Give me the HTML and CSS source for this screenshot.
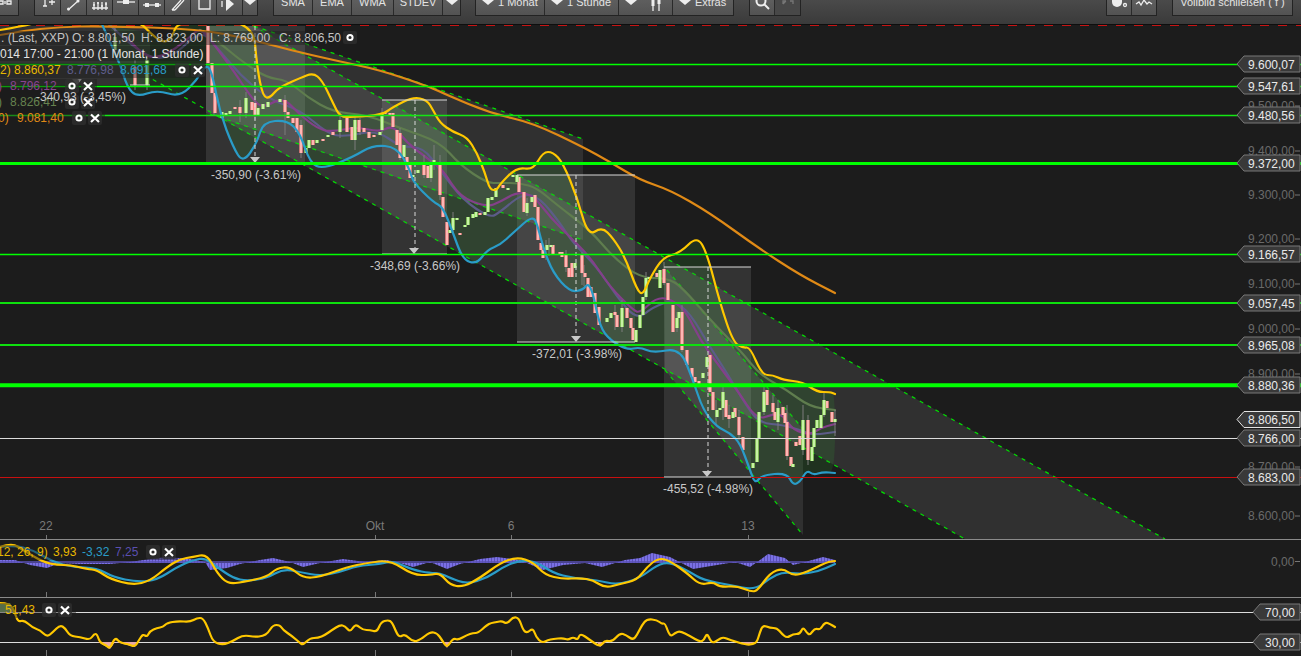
FILE: index.html
```html
<!DOCTYPE html>
<html lang="de">
<head>
<meta charset="utf-8">
<title>Chart</title>
<link rel="stylesheet" href="styles.css">
</head>
<body>
<header class="toolbar">
  <div class="group g-a">
    <div class="btn w27"><svg class="ico" viewBox="0 0 18 18"><path class="ws" d="M9 8v3M3 8h4v3H3zM11 8h4v3h-4z"/></svg></div>
  </div>
  <div class="group g-b">
    <div class="btn w26"><svg class="ico" viewBox="0 0 18 18"><path class="ws" d="M6 7v6M4 13h4M10 9h6M13 6v6"/></svg></div>
    <div class="btn w26"><svg class="ico" viewBox="0 0 18 18"><path class="ws" d="M3 17L13 8"/><circle class="wf" cx="3.5" cy="16" r="1.5"/><circle class="wf" cx="13" cy="8" r="1.5"/></svg></div>
    <div class="btn w26"><svg class="ico" viewBox="0 0 18 18"><path class="ws" d="M1 15h16M3 9v8M7 9v8M11 9v8M15 9v8"/><path class="ws" d="M2 12h2M6 10h2M10 13h2M14 11h2"/></svg></div>
    <div class="btn w26"><svg class="ico" viewBox="0 0 18 18"><path class="ws" d="M0 9h18"/><rect class="wf" x="6" y="7" width="6" height="4"/></svg></div>
    <div class="btn w26"><svg class="ico" viewBox="0 0 18 18"><path class="ws" d="M0 12h18"/><rect class="wf" x="2" y="10" width="4" height="4"/><rect class="wf" x="12" y="10" width="4" height="4"/></svg></div>
    <div class="btn w26"><svg class="ico" viewBox="0 0 18 18"><path class="ws" d="M3 17L12 7M6 17L15 7M3 17h3"/></svg></div>
    <div class="btn w26"><svg class="ico" viewBox="0 0 18 18"><path class="ws" d="M4 6v10h11V6"/></svg></div>
    <div class="btn w26"><svg class="ico" viewBox="0 0 18 18"><path class="wf" d="M5 4v14l8-7z"/><path class="ws" d="M1 8v6"/></svg></div>
    <div class="btn w14"><svg class="ico" viewBox="0 0 18 18"><path class="wf" d="M3 7h12l-6 5z"/></svg></div>
  </div>
  <div class="group g-c">
    <div class="btn w39">SMA</div>
    <div class="btn w39">EMA</div>
    <div class="btn w42">WMA</div>
    <div class="btn w49">STDEV</div>
    <div class="btn w17"><svg class="ico" viewBox="0 0 18 18"><path class="wf" d="M3 7h12l-6 5z"/></svg></div>
  </div>
  <div class="group g-d">
    <div class="btn w69 withcaret"><svg class="ico" viewBox="0 0 18 18"><path class="wf" d="M3 7h12l-6 5z"/></svg>1 Monat</div>
    <div class="btn w74 withcaret"><svg class="ico" viewBox="0 0 18 18"><path class="wf" d="M3 7h12l-6 5z"/></svg>1 Stunde</div>
    <div class="btn w54 withcaret"><svg class="ico" viewBox="0 0 18 18"><path class="wf" d="M3 7h12l-6 5z"/></svg><svg class="ico ico-gap" viewBox="0 0 18 18"><path class="ws" d="M6 3v15M12 3v15"/><rect class="wf" x="4.5" y="3" width="3" height="10"/><rect class="wf" x="10.5" y="3" width="3" height="8"/></svg></div>
    <div class="btn w60 withcaret"><svg class="ico" viewBox="0 0 18 18"><path class="wf" d="M3 7h12l-6 5z"/></svg>Extras</div>
  </div>
  <div class="group g-e">
    <div class="btn w25"><svg class="ico" viewBox="0 0 18 18"><circle class="ws2" cx="8" cy="8" r="4.5"/><path class="ws2" d="M11 11l5 5"/></svg></div>
    <div class="btn w25 off"><svg class="ico" viewBox="0 0 18 18"><path class="ds" d="M7 8H4v3M4 11l3-3M11 8h3v3"/></svg></div>
  </div>
  <div class="group g-f">
    <div class="btn w25"><svg class="ico" viewBox="0 0 18 18"><path class="wf" d="M2 6h10v3a5 5 0 0 1-10 0z"/><circle class="ws" cx="15" cy="12" r="1.5"/></svg></div>
    <div class="btn w24"><svg class="ico" viewBox="0 0 18 18"><path class="ws" d="M1 11l3-2 2 3 3-5 3 4 2-2 3 2"/></svg></div>
  </div>
  <div class="group g-g">
    <div class="btn w119">Vollbild schließen ( f )</div>
  </div>
</header>
<main class="stage">
<svg class="chart" viewBox="0 25 1301 631" xmlns="http://www.w3.org/2000/svg">
  <defs>
    <pattern id="hist" width="3" height="10" patternUnits="userSpaceOnUse">
      <rect class="hist-a" width="2" height="10"/>
      <rect class="hist-b" x="2" width="1" height="10"/>
    </pattern>
  </defs>
  <line class="reddash" x1="0" y1="25.5" x2="1301" y2="25.5"/>

  <!-- channels -->
  <polygon class="shade" points="206,26 254,26 583,139 583,240 206,113"/>
  <polygon class="shade" points="253,26 1165,539 965,539 206,110 206,26"/>
  <polygon class="shade" points="664,267 803,429 803,535 665,370"/>
  <!-- measured boxes -->
  <rect class="box" x="206" y="26" width="99" height="137"/>
  <rect class="box" x="382" y="100" width="65" height="154"/>
  <rect class="box" x="517" y="175" width="118" height="167"/>
  <rect class="box" x="664" y="267" width="87" height="210"/>
  <rect class="box" x="0" y="26" width="150" height="59"/>

  <!-- channel borders -->
  <path class="dash" d="M254 26L583 139M253 26L1165 539M145 75L965 539M210 114L583 240M667 270L803 429M665 370L803 535"/>

  <!-- bollinger fill -->
  <polygon class="band smooth" points="150,33 163,43 172,38 178,20 253,20 257,67 263,97 270,98 278,88 300,78 313,73 322,80 333,103 340,117 353,117 382,115 393,107 413,97 427,100 433,110 440,123 453,132 467,137 477,153 485,173 490,190 497,190 500,184 517,167 533,170 543,152 553,152 563,163 577,197 588,236 602,227 613,238 625,257 637,290 643,295 650,278 663,257 680,253 697,236 707,253 720,303 733,342 743,348 750,347 762,375 773,375 783,380 803,382 817,392 830,392 835,394 835,473 823,472 813,475 807,470 800,482 793,485 787,473 762,475 755,484 750,470 740,443 730,433 717,427 703,410 693,380 680,348 653,353 640,347 627,350 610,340 600,327 593,293 588,283 583,290 570,292 553,273 543,247 538,227 533,215 513,233 500,245 487,250 477,264 463,260 453,233 443,207 433,202 413,182 397,147 373,145 353,157 323,169 310,163 300,133 287,120 263,122 257,143 243,163 233,147 220,113 213,77 207,63 197,80 180,97 157,90 137,97 127,87 120,63 110,26"/>

  <!-- moving averages -->
  <polyline class="ln olive smooth" points="200,30 220,43 240,60 267,78 287,80 307,97 333,112 367,115 400,128 440,142 460,165 487,183 500,183 520,183 537,188 557,205 590,230 613,257 640,278 667,278 682,287 713,323 740,350 760,375 787,390 810,407 835,410"/>
  <polyline class="ln slate smooth" points="110,25 140,55 170,60 200,30 215,45 240,75 270,100 300,110 327,133 343,137 377,130 400,147 423,147 440,170 463,200 490,218 500,212 523,193 540,198 560,223 573,243 597,267 617,297 637,320 653,307 673,300 690,313 710,347 727,373 747,407 760,423 783,425 800,430 813,435 835,432"/>
  <polyline class="ln purple smooth" points="127,37 143,57 163,57 187,40 200,27 213,43 233,70 253,100 263,108 283,97 300,115 317,128 330,132 357,127 380,132 393,125 407,143 427,158 443,170 460,197 487,207 500,202 517,192 533,195 550,217 570,237 590,257 610,287 633,310 640,313 657,297 673,300 687,313 700,340 720,367 737,390 757,420 773,414 783,415 793,430 810,435 820,428 835,424"/>

  <!-- candles -->
  <path class="wick" d="M115 28V55M135 60V90M147 55V90M214 90V115M240 100V122M246 92V118M255 95V120M285 95V135M301 120V158M340 112V138M355 115V150M360 118V135M382 108V133M400 128V160M424 155V178M431 160V182M434 145V170M440 155V200M453 212V232M527 198V216M546 240V260M549 238V256M566 250V272M582 252V285M584 265V286M615 305V330M622 300V332M646 272V300M664 262V285M677 312V332M682 305V352M716 400V425M723 385V420M729 405V428M739 410V440M764 385V415M773 395V415M778 400V430M787 405V460M803 405V455M808 415V465M824 392V417M835 410V436"/>
  <path class="c-red" d="M135 67V85M208 26V63M212 63V93M215 93V113M235 107V109M240 107V113M252 102V110M255 103V115M285 100V112M288 112V118M293 118V123M297 118V132M301 125V153M313 140V145M323 139V141M333 132V135M347 118V132M352 127V140M359 120V132M364 128V132M369 132V138M374 135V137M385 112V114M390 113V115M393 113V127M397 130V145M400 133V158M407 157V170M410 165V178M424 165V175M428 166V178M440 162V195M443 197V217M447 222V245M460 233V235M480 213V215M503 185V188M519 177V192M524 192V212M535 195V207M538 207V240M541 243V250M543 250V258M553 245V255M560 252V254M562 252V257M566 254V267M569 268V277M572 263V277M582 255V273M585 273V277M588 278V297M591 287V297M595 293V313M599 307V325M615 312V315M617 315V327M627 308V318M631 318V328M633 328V340M657 273V277M664 269V283M668 283V300M673 305V332M682 312V350M687 350V365M692 368V377M695 377V382M699 381V384M710 355V392M713 392V410M726 400V417M729 415V419M735 408V417M739 417V435M743 437V450M767 390V405M773 403V412M775 412V420M783 407V415M785 413V423M787 422V456M791 457V466M796 442V446M800 436V445M808 420V460M827 401V408M832 412V422"/>
  <path class="c-red-in" d="M135 67V85M208 26V63M212 63V93M215 93V113M235 107V109M240 107V113M252 102V110M255 103V115M285 100V112M288 112V118M293 118V123M297 118V132M301 125V153M313 140V145M323 139V141M333 132V135M347 118V132M352 127V140M359 120V132M364 128V132M369 132V138M374 135V137M385 112V114M390 113V115M393 113V127M397 130V145M400 133V158M407 157V170M410 165V178M424 165V175M428 166V178M440 162V195M443 197V217M447 222V245M460 233V235M480 213V215M503 185V188M519 177V192M524 192V212M535 195V207M538 207V240M541 243V250M543 250V258M553 245V255M560 252V254M562 252V257M566 254V267M569 268V277M572 263V277M582 255V273M585 273V277M588 278V297M591 287V297M595 293V313M599 307V325M615 312V315M617 315V327M627 308V318M631 318V328M633 328V340M657 273V277M664 269V283M668 283V300M673 305V332M682 312V350M687 350V365M692 368V377M695 377V382M699 381V384M710 355V392M713 392V410M726 400V417M729 415V419M735 408V417M739 417V435M743 437V450M767 390V405M773 403V412M775 412V420M783 407V415M785 413V423M787 422V456M791 457V466M796 442V446M800 436V445M808 420V460M827 401V408M832 412V422"/>
  <path class="c-green" d="M115 37V50M147 60V85M222 112V118M226 113V115M230 111V114M246 98V113M258 108V115M263 104V109M268 102V107M280 99V102M306 148V153M309 140V148M317 140V143M328 135V137M340 120V132M355 120V140M380 132V135M382 113V130M404 145V157M413 175V177M418 170V173M431 165V178M434 160V165M450 230V233M453 218V230M457 218V220M465 225V227M468 217V225M473 214V218M476 212V217M485 212V215M488 198V212M492 197V200M496 188V197M508 188V190M513 175V177M517 175V182M527 203V213M532 197V202M547 245V250M551 245V247M575 263V268M607 318V322M611 313V318M622 308V327M636 330V342M640 315V328M643 297V315M646 278V297M649 277V279M660 270V288M677 318V328M679 312V318M703 373V378M707 357V367M717 410V417M720 408V410M723 392V408M733 412V418M753 463V468M757 439V462M759 412V438M764 392V412M778 408V422M793 464V467M803 420V450M812 447V461M814 428V447M817 420V428M821 415V428M824 400V415M835 419V422"/>
  <path class="c-green-in" d="M115 37V50M147 60V85M222 112V118M226 113V115M230 111V114M246 98V113M258 108V115M263 104V109M268 102V107M280 99V102M306 148V153M309 140V148M317 140V143M328 135V137M340 120V132M355 120V140M380 132V135M382 113V130M404 145V157M413 175V177M418 170V173M431 165V178M434 160V165M450 230V233M453 218V230M457 218V220M465 225V227M468 217V225M473 214V218M476 212V217M485 212V215M488 198V212M492 197V200M496 188V197M508 188V190M513 175V177M517 175V182M527 203V213M532 197V202M547 245V250M551 245V247M575 263V268M607 318V322M611 313V318M622 308V327M636 330V342M640 315V328M643 297V315M646 278V297M649 277V279M660 270V288M677 318V328M679 312V318M703 373V378M707 357V367M717 410V417M720 408V410M723 392V408M733 412V418M753 463V468M757 439V462M759 412V438M764 392V412M778 408V422M793 464V467M803 420V450M812 447V461M814 428V447M817 420V428M821 415V428M824 400V415M835 419V422"/>

  <!-- bands and long average -->
  <polyline class="ln orange smooth" points="0,35 20,31 60,27 100,26 200,29 253,40 290,50 333,60 380,70 430,87 447,95 490,113 533,123 583,147 610,162 640,180 670,190 710,213 757,247 800,275 835,293"/>
  <polyline class="ln yellow smooth" points="0,30 30,25 50,18 110,18 140,22 150,33 163,43 172,38 178,20 253,20 257,67 263,97 270,98 278,88 300,78 313,73 322,80 333,103 340,117 353,117 382,115 393,107 413,97 427,100 433,110 440,123 453,132 467,137 477,153 485,173 490,190 497,190 500,184 517,167 533,170 543,152 553,152 563,163 577,197 588,236 602,227 613,238 625,257 637,290 643,295 650,278 663,257 680,253 697,236 707,253 720,303 733,342 743,348 750,347 762,375 773,375 783,380 803,382 817,392 830,392 835,394"/>
  <polyline class="ln blue smooth" points="100,20 120,63 127,87 137,97 157,90 180,97 197,80 207,63 213,77 220,113 233,147 243,163 257,143 263,122 287,120 300,133 310,163 323,169 353,157 373,145 397,147 410,170 413,182 433,202 443,207 453,233 463,260 477,264 487,250 500,245 513,233 533,215 538,227 543,247 553,273 570,292 583,290 588,283 593,293 600,327 610,340 627,350 640,347 653,353 680,348 693,380 703,410 717,427 730,433 740,443 750,470 755,484 762,475 787,473 793,485 800,482 807,470 813,475 823,472 835,473"/>

  <!-- measure tools -->
  <path class="measure" d="M206 163H305M382 100H447M382 254H447M517 175H635M517 342H635M664 267H751M664 477H751M130 85H150"/>
  <path class="measure-dash" d="M255 26V158M415 100V249M576 175V337M708 267V472"/>
  <path class="arrow" d="M250 157h10l-5 6zM409 248h10l-5 6zM571 336h10l-5 6zM702 471h10l-5 6zM72 79h10l-5 6z"/>

  <!-- horizontal levels -->
  <line class="lv lv1" x1="0" y1="64.5" x2="1301" y2="64.5"/>
  <line class="lv lv1" x1="0" y1="86.5" x2="1301" y2="86.5"/>
  <line class="lv lv0" x1="0" y1="115.5" x2="1301" y2="115.5"/>
  <line class="lv lv3" x1="0" y1="163.5" x2="1301" y2="163.5"/>
  <line class="lv lv1" x1="0" y1="254.5" x2="1301" y2="254.5"/>
  <line class="lv lv2" x1="0" y1="303" x2="1301" y2="303"/>
  <line class="lv lv2" x1="0" y1="345" x2="1301" y2="345"/>
  <line class="lv lv4" x1="0" y1="385.3" x2="1301" y2="385.3"/>
  <line class="lv-w" x1="0" y1="438.5" x2="1301" y2="438.5"/>
  <line class="lv-r" x1="0" y1="477.5" x2="664" y2="477.5"/>
  <line class="lv-r" x1="751" y1="477.5" x2="1301" y2="477.5"/>

  <!-- measure labels -->
  <text class="tx lab" x="211" y="179">-350,90 (-3.61%)</text>
  <text class="tx lab" x="370" y="270">-348,69 (-3.66%)</text>
  <text class="tx lab" x="532" y="358">-372,01 (-3.98%)</text>
  <text class="tx lab" x="663" y="493">-455,52 (-4.98%)</text>

  <!-- legend -->
  <rect class="legbg" x="0" y="31" width="358" height="14"/>
  <rect class="legbg" x="0" y="46" width="206" height="15"/>
  <rect class="legbg" x="0" y="63" width="206" height="15"/>
  <rect class="legbg" x="0" y="79" width="97" height="15"/>
  <rect class="legbg" x="0" y="95" width="97" height="15"/>
  <rect class="legbg" x="0" y="111" width="105" height="15"/>
  <text class="tx leg-grey" x="1" y="42">. (Last, XXP)</text>
  <text class="tx leg-grey" x="72" y="42">O: 8.801,50</text>
  <text class="tx leg-grey" x="141" y="42">H: 8.823,00</text>
  <text class="tx leg-grey" x="210" y="42">L: 8.769,00</text>
  <text class="tx leg-grey" x="279" y="42">C: 8.806,50</text>
  <text class="tx leg-white" x="0" y="58">014 17:00 - 21:00 (1 Monat, 1 Stunde)</text>
  <text class="tx leg-yellow" x="0" y="74">2)</text>
  <text class="tx leg-yellow" x="14" y="74">8.860,37</text>
  <text class="tx leg-slate" x="67" y="74">8.776,98</text>
  <text class="tx leg-blue" x="120" y="74">8.691,68</text>
  <text class="tx leg-purple" x="-2" y="90">)</text>
  <text class="tx leg-purple" x="10" y="90">8.796,12</text>
  <text class="tx leg-olive" x="-2" y="106">)</text>
  <text class="tx leg-olive" x="10" y="106">8.826,41</text>
  <text class="tx leg-orange" x="-2" y="122">0)</text>
  <text class="tx leg-orange" x="17" y="122">9.081,40</text>

  <!-- legend icons -->
  <g class="ic"><rect class="ic-bg" x="343" y="31" width="14" height="13" rx="2"/><circle class="ic-ring" cx="350" cy="37.5" r="2.6"/></g>
  <g class="ic"><rect class="ic-bg" x="175" y="63" width="14" height="14" rx="2"/><circle class="ic-ring" cx="182" cy="70" r="2.6"/><rect class="ic-bg" x="191" y="63" width="14" height="14" rx="2"/><path class="ic-x" d="M194 66.5l8 7.5M202 66.5l-8 7.5"/></g>
  <g class="ic"><rect class="ic-bg" x="65" y="79" width="14" height="14" rx="2"/><circle class="ic-ring" cx="72" cy="86" r="2.6"/><rect class="ic-bg" x="81" y="79" width="14" height="14" rx="2"/><path class="ic-x" d="M84 82.5l8 7.5M92 82.5l-8 7.5"/></g>
  <g class="ic"><rect class="ic-bg" x="65" y="95" width="14" height="14" rx="2"/><circle class="ic-ring" cx="72" cy="102" r="2.6"/><rect class="ic-bg" x="81" y="95" width="14" height="14" rx="2"/><path class="ic-x" d="M84 98.5l8 7.5M92 98.5l-8 7.5"/></g>
  <g class="ic"><rect class="ic-bg" x="72" y="111" width="14" height="14" rx="2"/><circle class="ic-ring" cx="79" cy="118" r="2.6"/><rect class="ic-bg" x="88" y="111" width="14" height="14" rx="2"/><path class="ic-x" d="M91 114.5l8 7.5M99 114.5l-8 7.5"/></g>
  <text class="tx lab" x="36" y="101">-340,93 (-3,45%)</text>

  <!-- price axis -->
  <text class="tx tick" x="1248" y="110">9.500,00</text>
  <text class="tx tick" x="1248" y="155">9.400,00</text>
  <text class="tx tick" x="1248" y="199">9.300,00</text>
  <text class="tx tick" x="1248" y="243">9.200,00</text>
  <text class="tx tick" x="1248" y="288">9.100,00</text>
  <text class="tx tick" x="1248" y="333">9.000,00</text>
  <text class="tx tick" x="1248" y="378">8.900,00</text>
  <text class="tx tick" x="1248" y="471">8.700,00</text>
  <text class="tx tick" x="1248" y="520">8.600,00</text>
  <text class="tx tick" x="1271" y="566">0,00</text>
  <path class="tickline" d="M1295 106h5M1295 151h5M1295 195h5M1295 239h5M1295 284h5M1295 329h5M1295 374h5M1295 467h5M1295 516h5M1295 561.5h5"/>

  <g class="tag"><polygon points="1237,64 1244,56 1300,56 1300,72 1244,72"/><text class="tx tagtx" x="1248" y="68.5">9.600,07</text></g>
  <g class="tag"><polygon points="1237,86 1244,78 1300,78 1300,94 1244,94"/><text class="tx tagtx" x="1248" y="90.5">9.547,61</text></g>
  <g class="tag"><polygon points="1237,115 1244,107 1300,107 1300,123 1244,123"/><text class="tx tagtx" x="1248" y="119.5">9.480,56</text></g>
  <g class="tag"><polygon points="1237,163 1244,155 1300,155 1300,171 1244,171"/><text class="tx tagtx" x="1248" y="167.5">9.372,00</text></g>
  <g class="tag"><polygon points="1237,254 1244,246 1300,246 1300,262 1244,262"/><text class="tx tagtx" x="1248" y="258.5">9.166,57</text></g>
  <g class="tag"><polygon points="1237,303 1244,295 1300,295 1300,311 1244,311"/><text class="tx tagtx" x="1248" y="307.5">9.057,45</text></g>
  <g class="tag"><polygon points="1237,345 1244,337 1300,337 1300,353 1244,353"/><text class="tx tagtx" x="1248" y="349.5">8.965,08</text></g>
  <g class="tag"><polygon points="1237,385 1244,377 1300,377 1300,393 1244,393"/><text class="tx tagtx" x="1248" y="389.5">8.880,36</text></g>
  <g class="tag tag-hi"><polygon points="1237,419.5 1244,411.5 1300,411.5 1300,427.5 1244,427.5"/><text class="tx tagtx" x="1248" y="424">8.806,50</text></g>
  <g class="tag"><polygon points="1237,438 1244,430 1300,430 1300,446 1244,446"/><text class="tx tagtx" x="1248" y="442.5">8.766,00</text></g>
  <g class="tag"><polygon points="1237,477 1244,469 1300,469 1300,485 1244,485"/><text class="tx tagtx" x="1248" y="481.5">8.683,00</text></g>

  <!-- date axis -->
  <text class="tx date" x="46" y="530">22</text>
  <text class="tx date" x="375" y="530">Okt</text>
  <text class="tx date" x="511" y="530">6</text>
  <text class="tx date" x="748" y="530">13</text>
  <path class="tickline" d="M46.5 535v4M375.5 535v4M511.5 535v4M748.5 535v4M46.5 592v5M375.5 592v5M511.5 592v5M748.5 592v5M46.5 650v6M375.5 650v6M511.5 650v6M748.5 650v6"/>
  <line class="sep" x1="0" y1="539.5" x2="1301" y2="539.5"/>
  <line class="sep" x1="0" y1="597.5" x2="1301" y2="597.5"/>

  <!-- MACD -->
  <path class="histo" d="M0 560L15 560L30 565L47 568L60 563L80 564L110 564L130 562L150 559L167 557L190 559L205 562L210 570L227 568L240 564L260 560L273 558L290 562L303 567L320 563L343 559L365 562L387 560L400 563L413 567L430 562L447 569L460 564L480 559L497 557L520 560L543 570L563 565L585 563L602 567L625 560L640 558L652 553L670 557L693 569L717 565L735 562L750 567L760 560L768 554L785 558L793 565L805 562L823 557L835 560L835 563L0 563z"/>
  <line class="hist-base" x1="0" y1="562" x2="835" y2="562"/>
  <polyline class="ln2 blue smooth" points="0,547 13,545 33,550 53,562 73,567 97,568 113,577 137,582 157,580 177,567 193,560 205,558 217,567 233,578 247,581 267,578 283,569 300,572 320,576 340,572 357,566 380,564 393,561 413,570 430,573 440,573 450,578 467,584 487,578 503,567 520,560 537,562 553,573 573,578 597,580 617,585 640,578 657,565 670,562 690,572 703,580 730,585 755,590 770,578 783,572 800,574 817,572 835,564"/>
  <polyline class="ln2 yellow smooth" points="0,547 12,543 23,550 43,562 57,565 70,565 87,569 97,570 110,579 133,585 150,581 167,567 180,559 193,557 207,554 217,573 228,584 243,582 267,577 277,568 290,567 303,578 320,577 347,567 367,563 390,560 413,575 430,575 440,573 450,585 463,587 480,578 500,563 517,557 533,562 545,575 563,579 580,578 593,580 605,588 620,584 637,580 647,567 657,559 667,559 687,573 700,585 713,582 720,587 737,586 752,592 758,590 770,573 783,568 793,576 807,572 827,562 835,561"/>
  <rect class="legbg" x="0" y="545" width="178" height="15"/>
  <text class="tx leg-yellow" x="-3" y="556">12, 26, 9)</text>
  <text class="tx leg-yellow" x="53" y="556">3,93</text>
  <text class="tx leg-blue" x="82" y="556">-3,32</text>
  <text class="tx leg-slate2" x="115" y="556">7,25</text>
  <g class="ic"><rect class="ic-bg" x="146" y="545" width="14" height="14" rx="2"/><circle class="ic-ring" cx="153" cy="552" r="2.6"/><rect class="ic-bg" x="162" y="545" width="14" height="14" rx="2"/><path class="ic-x" d="M165 548.5l8 7.5M173 548.5l-8 7.5"/></g>

  <!-- RSI -->
  <line class="lv-w" x1="0" y1="612.5" x2="1301" y2="612.5"/>
  <line class="lv-w" x1="0" y1="642.5" x2="1301" y2="642.5"/>
  <path class="rsi-lo" d="M97 642L100 643L110 649L115 642L120 643L135 647L138 642zM213 642L223 645L228 642zM298 642L303 645L306 642zM443 642L447 648L450 642zM538 642L542 643L545 642zM597 642L600 647L606 642zM742 642L747 645L755 642z"/>
  <path class="rsi-hi" d="M0 612V603L10 603L15 612z"/>
  <polyline class="ln2 yellow smooth" points="0,603 10,603 15,613 18,622 24,620 33,628 40,630 47,637 53,632 60,625 65,628 70,636 80,637 90,640 94,634 97,634 100,643 106,645 110,649 115,637 120,643 128,644 135,647 139,640 143,634 147,637 150,631 157,628 163,627 167,623 178,621 190,622 197,618 203,618 208,628 213,642 223,645 233,641 243,635 255,637 263,636 268,633 273,625 280,625 283,630 292,636 300,643 303,645 310,638 318,638 325,635 332,630 340,625 345,626 350,632 354,626 357,625 363,630 370,630 377,632 381,622 388,620 392,622 397,634 400,637 405,634 413,642 420,640 430,632 437,633 442,640 447,648 453,638 458,640 467,635 473,633 478,633 487,625 491,623 497,622 502,621 507,624 513,617 519,618 523,630 527,633 533,628 536,637 542,643 548,640 553,639 563,638 568,640 573,637 578,640 580,633 590,640 600,647 605,640 612,642 620,633 626,635 633,640 637,635 642,625 647,619 657,620 662,624 665,623 670,637 675,633 680,631 690,636 700,642 704,640 707,633 710,640 713,643 718,640 723,637 730,640 747,645 753,644 757,642 760,632 763,625 770,628 777,628 782,634 787,638 793,634 800,634 803,627 807,633 810,635 815,628 820,630 825,622 830,624 835,627"/>
  <rect class="legbg" x="0" y="603" width="76" height="15"/>
  <text class="tx leg-yellow" x="5" y="614">51,43</text>
  <g class="ic"><rect class="ic-bg" x="42" y="603" width="14" height="14" rx="2"/><circle class="ic-ring" cx="49" cy="610" r="2.6"/><rect class="ic-bg" x="58" y="603" width="14" height="14" rx="2"/><path class="ic-x" d="M61 606.5l8 7.5M69 606.5l-8 7.5"/></g>
  <g class="tag"><polygon points="1253,612 1260,604 1300,604 1300,620 1260,620"/><text class="tx tagtx" x="1265" y="616.5">70,00</text></g>
  <g class="tag"><polygon points="1253,642 1260,634 1300,634 1300,650 1260,650"/><text class="tx tagtx" x="1265" y="646.5">30,00</text></g>
</svg>
</main>
<script src="script.js"></script>
</body>
</html>
```

FILE: styles.css
```css
* { box-sizing: border-box; }
html, body { margin: 0; height: 100%; background: #1c1c1c; overflow: hidden; }
body { font-family: "Liberation Sans", Arial, sans-serif; }

.toolbar {
  display: flex;
  align-items: flex-start;
  height: 25px;
  overflow: hidden;
  background: linear-gradient(#4a4a4a, #3a3a3a);
  border-bottom: 1px solid #0e0e0e;
}
.group {
  display: flex;
  flex: none;
  height: 28px;
  margin-top: -12px;
  border: 1px solid #232323;
  background: #585858;
}
.g-a { margin-left: -10px; }
.g-b { margin-left: 15px; }
.g-c { margin-left: 15px; }
.g-d { margin-left: 14px; }
.g-e { margin-left: 15px; }
.g-f { margin-left: 305px; }
.g-g { margin-left: 15px; }

.btn {
  display: flex;
  align-items: center;
  justify-content: center;
  flex: none;
  font-size: 11px;
  color: #e4e4e4;
  border-right: 1px solid #2a2a2a;
  background: linear-gradient(#666, #535353);
  white-space: nowrap;
}
.btn:last-child { border-right: 0; }
.btn.off { background: #484848; }
.w14 { width: 14px; }
.w17 { width: 17px; }
.w24 { width: 24px; }
.w25 { width: 25px; }
.w26 { width: 26px; }
.w27 { width: 27px; }
.w39 { width: 39px; }
.w42 { width: 42px; }
.w49 { width: 49px; }
.w54 { width: 54px; }
.w60 { width: 60px; }
.w69 { width: 69px; }
.w74 { width: 74px; }
.w119 { width: 119px; }
.withcaret { justify-content: flex-start; gap: 1px; padding-left: 3px; }
.ico { width: 18px; height: 18px; flex: none; }
.w14 .ico { margin: 0 -2px; }
.ico-gap { margin-left: 6px; }
.ws { fill: none; stroke: #eee; stroke-width: 1.3; }
.ws2 { fill: none; stroke: #eee; stroke-width: 2; }
.wf { fill: #eee; }
.ds { fill: none; stroke: #777; stroke-width: 1.3; }

.stage { display: block; }
.chart { display: block; width: 1301px; height: 631px; }

.reddash { stroke: #c81414; stroke-width: 1; stroke-dasharray: 9 9; }
.shade { fill: rgba(255, 255, 255, 0.09); }
.box { fill: rgba(255, 255, 255, 0.1); }
.dash { fill: none; stroke: #00e000; stroke-width: 1.2; stroke-dasharray: 4 5; }
.band { fill: rgba(50, 170, 50, 0.16); }

.ln { fill: none; stroke-width: 2.2; stroke-linejoin: round; stroke-linecap: round; }
.ln2 { fill: none; stroke-width: 2.2; stroke-linejoin: round; stroke-linecap: round; }
.olive { stroke: #5f7d4e; }
.slate { stroke: #5c5c88; }
.purple { stroke: #84408a; }
.orange { stroke: #e08a16; }
.yellow { stroke: #ffc800; }
.blue { stroke: #2a9cc8; }

.wick { fill: none; stroke: #7c7c7c; stroke-width: 1; }
.c-red { fill: none; stroke: #ff8888; stroke-width: 3.4; }
.c-red-in { fill: none; stroke: #ffe4e0; stroke-width: 1; }
.c-green { fill: none; stroke: #9ee866; stroke-width: 3.4; }
.c-green-in { fill: none; stroke: #f0ffe2; stroke-width: 1; }

.measure { fill: none; stroke: #d8d8d8; stroke-width: 1; }
.measure-dash { fill: none; stroke: #d8d8d8; stroke-width: 1; stroke-dasharray: 4 3; }
.arrow { fill: #c8c8c8; }

.lv { stroke: #00ff00; }
.lv0 { stroke: #14e614; stroke-width: 1.4; }
.lv1 { stroke-width: 1.4; }
.lv2 { stroke: #0ee00e; stroke-width: 2; }
.lv3 { stroke-width: 3; }
.lv4 { stroke-width: 4; }
.lv-w { stroke: #dcdcdc; stroke-width: 1; }
.lv-r { stroke: #c81010; stroke-width: 1; }

.tx { font-family: "Liberation Sans", Arial, sans-serif; font-size: 12px; white-space: pre; }
.lab { fill: #c8c8c8; }
.leg-grey { fill: #c4c4c4; }
.leg-white { fill: #e4e4e4; }
.leg-yellow { fill: #e8b800; }
.leg-slate { fill: #5f5f8e; }
.leg-slate2 { fill: #5a4fb0; }
.leg-blue { fill: #2a9cc8; }
.leg-purple { fill: #8a4490; }
.leg-olive { fill: #66824f; }
.leg-orange { fill: #e08a16; }
.legbg { fill: rgba(28, 28, 28, 0.45); }

.ic-bg { fill: rgba(47, 47, 47, 0.75); }
.ic-ring { fill: none; stroke: #fff; stroke-width: 2; }
.ic-x { fill: none; stroke: #fff; stroke-width: 2.2; }

.tick { fill: #6a6a6a; }
.tickline { fill: none; stroke: #777; stroke-width: 1; }
.date { fill: #7a7a7a; text-anchor: middle; }
.sep { stroke: #8a8a8a; stroke-width: 1; }

.tag polygon { fill: #393939; stroke: #787878; stroke-width: 1; }
.tag-hi polygon { stroke: #e4e4e4; }
.tagtx { fill: #eaeaea; }

.hist-a { fill: #7a70e4; }
.hist-b { fill: #5c52b8; }
.histo { fill: url(#hist); }
.hist-base { stroke: #5a50b4; stroke-width: 1.5; }
.rsi-lo { fill: #e8a8a8; }
.rsi-hi { fill: #86b070; }
```

FILE: script.js
```js
// Turn the sampled points of each curve into a smooth path (midpoint quadratics).
document.querySelectorAll('.smooth').forEach(function (el) {
  var nums = el.getAttribute('points').trim().split(/[\s,]+/).map(Number);
  var pts = [];
  for (var i = 0; i < nums.length; i += 2) pts.push([nums[i], nums[i + 1]]);
  var closed = el.tagName.toLowerCase() === 'polygon';
  var d = 'M' + pts[0][0] + ' ' + pts[0][1];
  for (var j = 1; j < pts.length - 1; j++) {
    var mx = (pts[j][0] + pts[j + 1][0]) / 2;
    var my = (pts[j][1] + pts[j + 1][1]) / 2;
    d += 'Q' + pts[j][0] + ' ' + pts[j][1] + ' ' + mx + ' ' + my;
  }
  var last = pts[pts.length - 1];
  d += 'L' + last[0] + ' ' + last[1] + (closed ? 'Z' : '');
  var path = document.createElementNS('http://www.w3.org/2000/svg', 'path');
  path.setAttribute('class', el.getAttribute('class'));
  path.setAttribute('d', d);
  el.parentNode.replaceChild(path, el);
});
```
